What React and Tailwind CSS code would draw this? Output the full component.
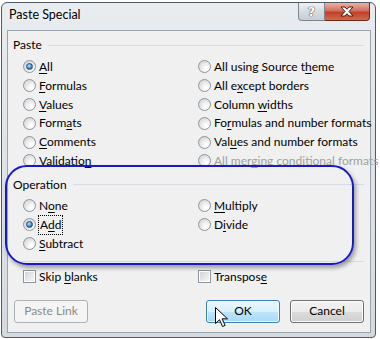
import React from 'react'

const pasteLeft = [
  ['All', 0, true],
  ['Formulas', 0],
  ['Values', 0],
  ['Formats', 4],
  ['Comments', 0],
  ['Validation', 9],
]

const pasteRight = [
  ['All using Source theme', 18],
  ['All except borders', 5],
  ['Column widths', 7],
  ['Formulas and number formats', 2],
  ['Values and number formats', 3],
  ['All merging conditional formats', 7, false, true],
]

function Label({ text, k }) {
  if (k < 0) return text
  return (
    <>
      {text.slice(0, k)}
      <span className="underline underline-offset-[2px]">{text[k]}</span>
      {text.slice(k + 1)}
    </>
  )
}

function Radio({ checked }) {
  return (
    <span className="flex h-[13px] w-[13px] shrink-0 items-center justify-center rounded-full border border-[#8d969e] bg-[radial-gradient(circle_at_68%_72%,#ffffff_10%,#e6e6e6_55%,#c6c9cc)]">
      {checked && (
        <span className="h-[7px] w-[7px] rounded-full border border-[#1d4f75] bg-[radial-gradient(circle_at_40%_35%,#bfe9fc,#3b8fc6_55%,#164469)]" />
      )}
    </span>
  )
}

function Checkbox() {
  return (
    <span className="flex h-[13px] w-[13px] shrink-0 items-center justify-center border border-[#8d969e] bg-white">
      <span className="h-[9px] w-[9px] bg-[linear-gradient(135deg,#d2d5d8,#f6f6f6)]" />
    </span>
  )
}

function RadioRow({ text, k, checked, disabled, focus }) {
  return (
    <div className="flex h-[18.8px] items-center gap-[3px] whitespace-nowrap">
      <Radio checked={checked} />
      <span
        className={
          (disabled ? 'text-[#a0a0a0] ' : 'text-black ') +
          (focus ? 'outline outline-1 outline-dotted outline-black px-px' : '')
        }
      >
        <Label text={text} k={k} />
      </span>
    </div>
  )
}

function GroupHeader({ title }) {
  return (
    <div className="flex h-[14px] items-center gap-[6px] pl-[5px] pr-[6px]">
      <span className="leading-none">{title}</span>
      <div className="h-px flex-1 bg-[#d5dbe0]" />
    </div>
  )
}

export default function App() {
  return (
    <div className="relative h-[339px] w-[380px] overflow-hidden bg-white pt-[2px] pl-[1px] font-['Lato',sans-serif] text-[12px] text-black">
      {/* Window frame */}
      <div className="flex h-[336px] w-[375px] flex-col rounded-t-[6px] rounded-b-[4px] border border-[#505a64] bg-[linear-gradient(180deg,#e9ecef,#d4dae0)] pl-[5px] pr-[4px] pb-[4px]">
        {/* Title bar */}
        <div className="relative flex h-[27px] shrink-0 items-center">
          <span className="pl-[2px] pb-[2px] text-[12.5px] [text-shadow:0_0_6px_#fff]">Paste Special</span>
          <div className="absolute right-[1px] top-0 flex h-[18px]">
            <div className="flex w-[27px] items-center justify-center rounded-bl-[4px] border border-t-0 border-[#7d868f] bg-[linear-gradient(180deg,#eef0f3,#d7dce1_50%,#c8ced5)]">
              <span className="font-['DejaVu_Sans'] text-[13px] font-bold leading-none text-white [text-shadow:0_0_1px_#333,0_0_1px_#333]">?</span>
            </div>
            <div className="flex w-[45px] items-center justify-center rounded-br-[4px] border border-t-0 border-l-0 border-[#6a2a20] bg-[linear-gradient(180deg,#eab1a4,#d4705d_45%,#c2402a_55%,#cf6a4a)]">
              <svg width="14" height="11" viewBox="0 0 14 11">
                <path d="M1 1h4l2 2.3L9 1h4l-4 4.5 4 4.5H9L7 7.7 5 10H1l4-4.5z" fill="#fff" stroke="#4a1d15" strokeWidth="1" strokeLinejoin="round" />
              </svg>
            </div>
          </div>
        </div>

        {/* Client area */}
        <div className="flex flex-1 flex-col border border-[#9aa4ad] bg-[#f0f0f0] pt-[7px]">
          <GroupHeader title="Paste" />
          <div className="mt-[5.6px] grid grid-cols-[175px_1fr] pl-[15px]">
            <div className="flex flex-col">
              {pasteLeft.map(([t, k, c]) => (
                <RadioRow key={t} text={t} k={k} checked={c} />
              ))}
            </div>
            <div className="flex flex-col">
              {pasteRight.map(([t, k, c, d]) => (
                <RadioRow key={t} text={t} k={k} checked={c} disabled={d} />
              ))}
            </div>
          </div>

          <div className="mt-[7.6px]">
            <GroupHeader title="Operation" />
          </div>
          <div className="mt-[4.6px] grid grid-cols-[175px_1fr] pl-[15px]">
            <div className="flex flex-col">
              <RadioRow text="None" k={1} />
              <RadioRow text="Add" k={1} checked focus />
              <RadioRow text="Subtract" k={0} />
            </div>
            <div className="flex flex-col">
              <RadioRow text="Multiply" k={0} />
              <RadioRow text="Divide" k={1} />
            </div>
          </div>

          <div className="mt-[8px] ml-[5px] mr-[6px] h-px bg-[#d5dbe0]" />

          <div className="mt-[6px] grid h-[16px] grid-cols-[175px_1fr] pl-[15px]">
            <div className="flex items-center gap-[3px]">
              <Checkbox />
              <span><Label text="Skip blanks" k={5} /></span>
            </div>
            <div className="flex items-center gap-[3px]">
              <Checkbox />
              <span><Label text="Transpose" k={8} /></span>
            </div>
          </div>

          <div className="mt-[16px] flex h-[23px] pl-[6px] pr-[6px]">
            <button className="w-[74px] rounded-[3px] border border-[#adb2b5] bg-[#f4f4f4] text-[#8a8a8a]">
              Paste Link
            </button>
            <div className="flex-1" />
            <button className="w-[74px] rounded-[3px] border border-[#3c7fb1] bg-[linear-gradient(180deg,#eaf6fd,#d9f0fc_50%,#bee6fd_50%,#a7d9f5)] shadow-[inset_0_0_0_1px_#f4fbff]">
              OK
            </button>
            <button className="ml-[10px] w-[74px] rounded-[3px] border border-[#707070] bg-[linear-gradient(180deg,#f2f2f2,#ebebeb_50%,#dddddd_50%,#cfcfcf)] shadow-[inset_0_0_0_1px_#fcfcfc]">
              Cancel
            </button>
          </div>
        </div>
      </div>

      {/* Blue annotation callout */}
      <div className="absolute left-[5px] top-[165px] h-[100px] w-[349px] rounded-[22px] border-[2.5px] border-[#1a1ac4] shadow-[2px_3px_4px_rgba(0,0,0,0.35)]" />

      {/* Mouse cursor */}
      <svg className="absolute left-[215px] top-[307px]" width="13" height="21" viewBox="0 0 13 21">
        <path d="M0.5 0.5v16l4-3.8 3 6.8 2.6-1.1-3-6.6h5.4z" fill="#fff" stroke="#000" strokeWidth="1" strokeLinejoin="round" />
      </svg>
    </div>
  )
}
